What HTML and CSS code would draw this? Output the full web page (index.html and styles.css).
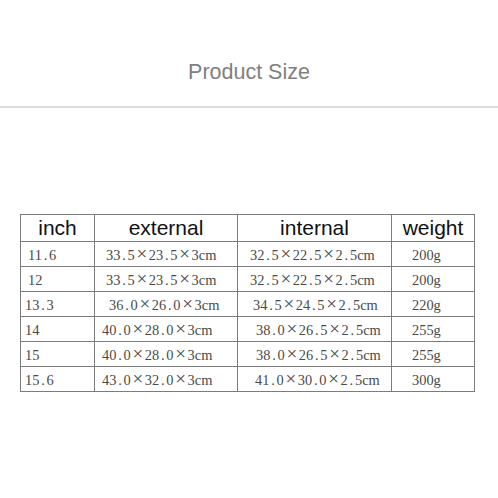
FILE: index.html
```html
<!DOCTYPE html>
<html lang="en">
<head>
<meta charset="utf-8">
<title>Product Size</title>
<link rel="stylesheet" href="styles.css">
</head>
<body>
<header class="head">
  <h1 class="title">Product Size</h1>
  <div class="rule"></div>
</header>
<table class="size">
  <colgroup><col class="c1"><col class="c2"><col class="c3"><col class="c4"></colgroup>
  <thead>
    <tr><th>inch</th><th>external</th><th>internal</th><th>weight</th></tr>
  </thead>
  <tbody>
    <tr>
      <td class="pl7">11<span class="p">.</span>6</td>
      <td class="pl11">33<span class="p">.</span>5<span class="x">×</span>23<span class="p">.</span>5<span class="x">×</span>3cm</td>
      <td class="pl12">32<span class="p">.</span>5<span class="x">×</span>22<span class="p">.</span>5<span class="x">×</span>2<span class="p">.</span>5cm</td>
      <td class="pl20">200g</td>
    </tr>
    <tr>
      <td class="pl7">12</td>
      <td class="pl11">33<span class="p">.</span>5<span class="x">×</span>23<span class="p">.</span>5<span class="x">×</span>3cm</td>
      <td class="pl12">32<span class="p">.</span>5<span class="x">×</span>22<span class="p">.</span>5<span class="x">×</span>2<span class="p">.</span>5cm</td>
      <td class="pl20">200g</td>
    </tr>
    <tr>
      <td class="pl4">13<span class="p">.</span>3</td>
      <td class="pl14">36<span class="p">.</span>0<span class="x">×</span>26<span class="p">.</span>0<span class="x">×</span>3cm</td>
      <td class="pl15">34<span class="p">.</span>5<span class="x">×</span>24<span class="p">.</span>5<span class="x">×</span>2<span class="p">.</span>5cm</td>
      <td class="pl20">220g</td>
    </tr>
    <tr>
      <td class="pl4">14</td>
      <td class="pl7">40<span class="p">.</span>0<span class="x">×</span>28<span class="p">.</span>0<span class="x">×</span>3cm</td>
      <td class="pl18">38<span class="p">.</span>0<span class="x">×</span>26<span class="p">.</span>5<span class="x">×</span>2<span class="p">.</span>5cm</td>
      <td class="pl20">255g</td>
    </tr>
    <tr>
      <td class="pl4">15</td>
      <td class="pl7">40<span class="p">.</span>0<span class="x">×</span>28<span class="p">.</span>0<span class="x">×</span>3cm</td>
      <td class="pl18">38<span class="p">.</span>0<span class="x">×</span>26<span class="p">.</span>5<span class="x">×</span>2<span class="p">.</span>5cm</td>
      <td class="pl20">255g</td>
    </tr>
    <tr>
      <td class="pl4">15<span class="p">.</span>6</td>
      <td class="pl7">43<span class="p">.</span>0<span class="x">×</span>32<span class="p">.</span>0<span class="x">×</span>3cm</td>
      <td class="pl17">41<span class="p">.</span>0<span class="x">×</span>30<span class="p">.</span>0<span class="x">×</span>2<span class="p">.</span>5cm</td>
      <td class="pl20">300g</td>
    </tr>
  </tbody>
</table>
</body>
</html>
```
FILE: styles.css
```css
html, body {
  margin: 0;
  padding: 0;
  background: #ffffff;
}

.head {
  padding-top: 60px;
}

.title {
  margin: 0;
  font-family: "Liberation Sans", Arial, sans-serif;
  font-size: 21.5px;
  font-weight: normal;
  line-height: 25px;
  color: #808080;
  text-align: center;
}

.rule {
  margin-top: 21px;
  height: 2px;
  background: #dcdcdc;
}

.size {
  margin: 106px 0 0 20px;
  width: 454px;
  border-collapse: collapse;
  table-layout: fixed;
}

.c1 { width: 74px; }
.c2 { width: 143px; }
.c3 { width: 154px; }
.c4 { width: 83px; }

.size th,
.size td {
  border: 1px solid #7c7c7c;
  padding: 0;
  vertical-align: middle;
}

.size th {
  height: 26px;
  font-family: "Liberation Sans", Arial, sans-serif;
  font-size: 21px;
  font-weight: normal;
  color: #111111;
  text-align: center;
  line-height: 24px;
}

.size td {
  height: 22px;
  font-family: "Liberation Serif", "Times New Roman", serif;
  font-size: 14.4px;
  line-height: 18px;
  color: #4a4a4a;
  text-align: left;
  white-space: nowrap;
  padding-top: 2px;
}

.p {
  display: inline-block;
  width: 0.5em;
  text-align: center;
}

.x {
  display: inline-block;
  width: 14px;
  text-align: center;
  font-size: 19px;
  line-height: 14px;
}

.size .pl4 { padding-left: 4px; }
.size .pl7 { padding-left: 7px; }
.size .pl11 { padding-left: 11px; }
.size .pl12 { padding-left: 12px; }
.size .pl14 { padding-left: 14px; }
.size .pl15 { padding-left: 15px; }
.size .pl17 { padding-left: 17px; }
.size .pl18 { padding-left: 18px; }
.size .pl20 { padding-left: 20px; }
```
